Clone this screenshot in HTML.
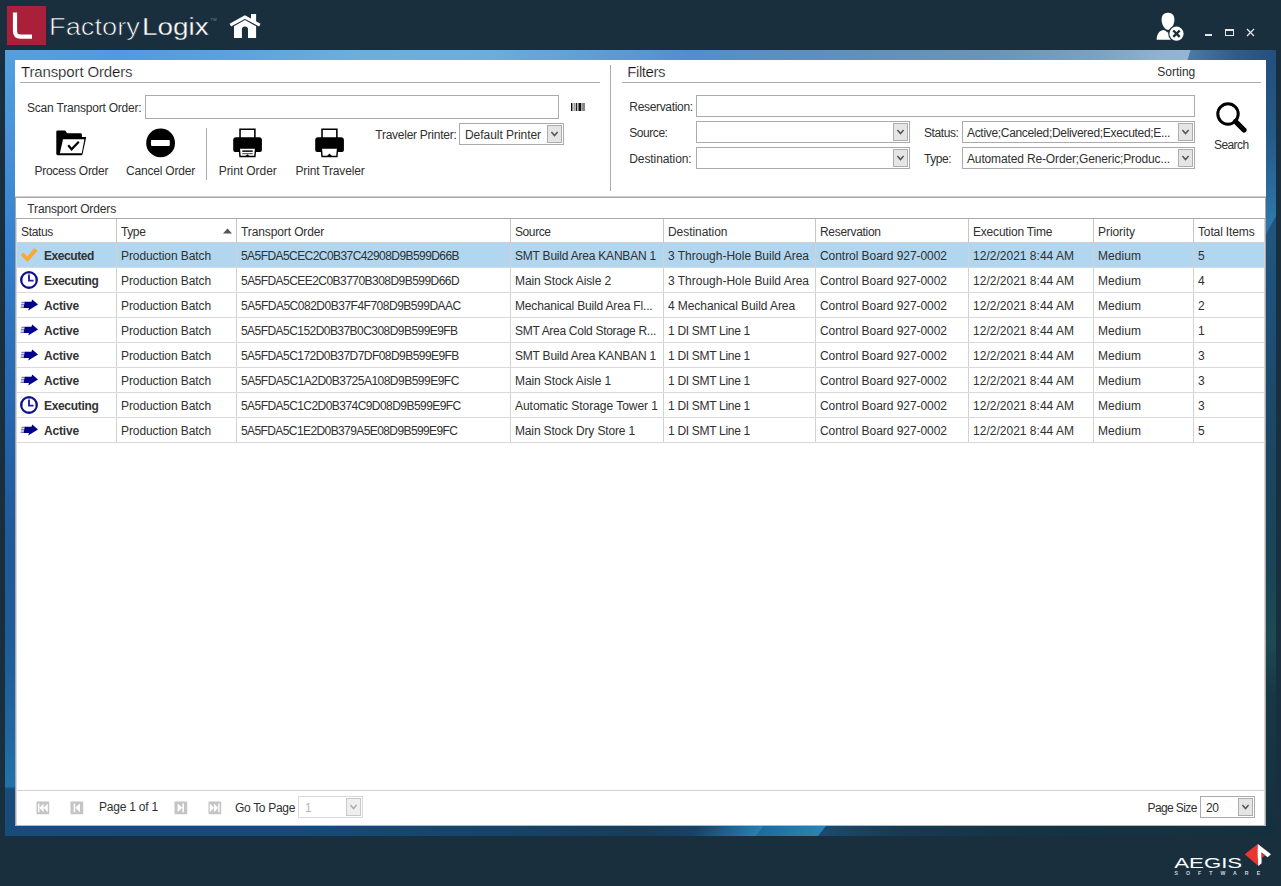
<!DOCTYPE html>
<html lang="en">
<head>
<meta charset="utf-8">
<title>FactoryLogix - Transport Orders</title>
<style>
*{box-sizing:border-box;margin:0;padding:0}
html,body{width:1281px;height:886px;overflow:hidden}
body{background:#1a2f3e;font-family:"Liberation Sans",sans-serif;font-size:12px;color:#303030;position:relative}
.abs{position:absolute}
.t{position:absolute;white-space:nowrap;line-height:14px}
#logo{left:7px;top:6px;width:39px;height:39px;background:#aa1f39}
.brand{position:absolute;top:12px;font-size:23px;line-height:30px;color:#fff;white-space:nowrap;transform-origin:0 0}
#frame{left:5px;top:50px;width:1271px;height:786px;background:#1a2f3e}
#fT{left:5px;top:50px;width:1271px;height:10px;background:linear-gradient(90deg,#54a0de 0,#509be0 9%,#5ba4e0 19%,#6bafdf 28%,#6aaddf 38%,#5c9dd8 47%,#4f8fd0 54%,#5a8fc5 60%,#6091bc 68%,#6a95b6 78%,#7ba2c0 86%,#8db1cf 90.5%,#93b6d2 93.1%)}
#fTR{left:1184.5px;top:50px;width:91.5px;height:10px;background:linear-gradient(90deg,#4d7da7 0,#3f6e9a 25%,#2f5d8a 55%,#234f7c 100%);clip-path:polygon(6px 0,100% 0,100% 100%,3px 100%)}
#fL{left:5px;top:50px;width:10px;height:786px;background:linear-gradient(180deg,#54a0de 0,#4790d8 13%,#3580cf 25%,#2b70bb 38%,#2463aa 50%,#1f5a9a 62%,#1e5c98 75%,#2068a0 87.8%,#2272a8 93.7%,#184c7c 94%,#174b7a 100%)}
#fR{left:1266px;top:60px;width:10px;height:776px;background:linear-gradient(180deg,#20557f 0,#20557f 23%,#1e5078 32%,#1b4663 50%,#1a4457 65%,#1d4a52 75%,#163843 82%,#14303f 100%)}
#fR2{left:1266px;top:60px;width:10px;height:176px;background:linear-gradient(180deg,#23507f 0,#245886 40%,#2a6a9b 70%,#2e76a9 90%,#2e76a9 100%);clip-path:polygon(0 0,100% 0,100% 156px,0 174px)}
#fB{left:5px;top:826px;width:1271px;height:10px;overflow:hidden;background:linear-gradient(90deg,#174b7a 0,#164a78 23%,#15446b 38%,#163d5c 50%,#174269 54.7%,#1b4a6e 64.5%,#163a52 70.5%,#153443 80%,#14303f 100%)}
#fB i{position:absolute;top:0;height:10px;transform:skewX(-38.66deg)}
#panel{left:15px;top:60px;width:1251px;height:766px;background:#fff}
.h1{font-size:15px;line-height:18px;color:#111;-webkit-text-stroke:0.22px #fff}
.hr{height:1px;background:#ababab}
.inp{border:1px solid #ababab;background:#fff}
.cb{border:1px solid #ababab;background:#fff}
.cb .btn{position:absolute;right:1px;top:1px;bottom:1px;width:15px;border:1px solid #adadad;background:#e5e5e5}
.cb .btn svg{position:absolute;left:2px;top:5px}
.cb .v{position:absolute;left:4px;top:4px;white-space:nowrap;line-height:14px}
.lbl{text-align:center}
#grid{left:17px;top:219px;width:1247px}
.row{position:absolute;left:0;width:1247px;height:25px;border-bottom:1px solid #d9d9d9}
.row.sel{background:#b0d6f0}
.hdr{position:absolute;left:0;top:0;width:1247px;height:24px;border-bottom:1px solid #d2d2d2}
.c{position:absolute;top:0;height:100%;border-right:1px solid #d2d2d2;padding-left:4px;padding-top:1px;line-height:25px;white-space:nowrap;overflow:hidden}
.hdr .c{line-height:25px;border-right-color:#c6c6c6;height:24px}
.c1{left:0;width:100px}.c2{left:100px;width:120px}.c3{left:220px;width:274px}.c4{left:494px;width:153px}
.c5{left:647px;width:152px}.c6{left:799px;width:153px}.c7{left:952px;width:125px}.c8{left:1077px;width:100px}.c9{left:1177px;width:70px;border-right:none}
.st{font-weight:bold;padding-left:27px;color:#333}
.ico{position:absolute;left:2px;top:3px}
</style>
</head>
<body>
<div id="logo" class="abs"><svg width="39" height="39" viewBox="0 0 39 39"><path d="M8 6.5 V25 Q8 30.6 13.5 30.6 H25" fill="none" stroke="#fff" stroke-width="4.2"/></svg></div>
<div class="brand" style="left:49.4px;transform:scaleX(1.185);-webkit-text-stroke:0.65px #1a2f3e">Factory</div>
<div class="brand" style="left:141.8px;transform:scaleX(1.214);-webkit-text-stroke:0.3px #1a2f3e">Logix</div>
<div class="t" style="left:210.5px;top:17px;font-size:4px;line-height:5px;color:#7f8d98;letter-spacing:0.2px">TM</div>
<svg class="abs" style="left:229px;top:13px" width="33" height="26" viewBox="0 0 33 26">
 <path d="M1.3 12.1 L15.9 4.1 L30.8 12.1" fill="none" stroke="#fff" stroke-width="3.1"/>
 <path d="M22 0.9 H27.1 V9 L22 6.2 Z" fill="#fff"/>
 <path d="M5 13.2 L15.9 7.1 L27.1 13.2 V25.1 H19 V16.6 A3.05 3.05 0 0 0 12.9 16.6 V25.1 H5 Z" fill="#fff"/>
</svg>
<svg class="abs" style="left:1155px;top:11px" width="32" height="32" viewBox="0 0 32 32">
 <path d="M13 1.7 C17.6 1.7 19.4 4.8 19.4 8.8 C19.4 13.4 16.4 18.9 13 18.9 C9.6 18.9 6.6 13.4 6.6 8.8 C6.6 4.8 8.4 1.7 13 1.7 Z" fill="#fff"/>
 <path d="M1.6 28.7 C1.8 22.6 4.4 19.9 8.2 19 L10 19.5 L14.8 22.9 L17 28.7 Z" fill="#fff"/>
 <circle cx="21.5" cy="22.7" r="8.3" fill="#1a2f3e"/>
 <circle cx="21.5" cy="22.7" r="7.1" fill="#fff"/>
 <path d="M18.3 19.5 L24.7 25.9 M24.7 19.5 L18.3 25.9" stroke="#1a2f3e" stroke-width="2.4"/>
</svg>
<div class="abs" style="left:1205px;top:34px;width:7px;height:2px;background:#e6e6e6"></div>
<div class="abs" style="left:1225px;top:29px;width:9px;height:7px;border:1px solid #e6e6e6;border-top-width:2px"></div>
<svg class="abs" style="left:1246px;top:28px" width="9" height="9" viewBox="0 0 9 9"><path d="M1 1 L8 8 M8 1 L1 8" stroke="#e6e6e6" stroke-width="1.3"/></svg>
<div id="fT" class="abs"></div>
<div id="fTR" class="abs"></div>
<div id="fL" class="abs"></div>
<div id="fR" class="abs"></div>
<div id="fR2" class="abs"></div>
<div id="panel" class="abs"></div>
<div id="fB" class="abs"><i style="left:690px;width:65px;background:linear-gradient(90deg,#174269,#2a80ad)"></i><i style="left:755px;width:62px;background:linear-gradient(90deg,#1d6c9c,#2e82ad)"></i></div>
<div class="t h1" style="left:21px;top:63px;font-size:15px;letter-spacing:-0.135px;">Transport Orders</div>
<div class="abs hr" style="left:20px;top:82px;width:580px"></div>
<div class="t" style="left:27px;top:101px;letter-spacing:-0.201px;">Scan Transport Order:</div>
<div class="abs inp" style="left:145px;top:95px;width:414px;height:24px"></div>
<svg class="abs" style="left:570.8px;top:103px" width="14" height="8" viewBox="0 0 14 8"><rect x="0" y="0" width="1.4" height="8" fill="#111"/><rect x="1.4" y="0" width="1" height="8" fill="#8a8a8a"/><rect x="2.4" y="0" width="1" height="8" fill="#c4c4c4"/><rect x="3.4" y="0" width="1.1" height="8" fill="#777"/><rect x="5" y="0" width="1.1" height="8" fill="#222"/><rect x="6.1" y="0" width="1.2" height="8" fill="#b5b5b5"/><rect x="7.5" y="0" width="2.7" height="8" fill="#111"/><rect x="10.2" y="0" width="0.9" height="8" fill="#aaa"/><rect x="11.1" y="0" width="2.9" height="8" fill="#858585"/></svg>
<svg class="abs" style="left:56px;top:129.5px" width="31" height="26" viewBox="0 0 31 26">
 <path d="M0.3 1.8 Q0.3 0.5 1.6 0.5 H8.6 Q9.4 0.5 9.8 1.2 L11 3.3 H24.6 Q25.9 3.3 25.9 4.6 V8 H7 L2 24 H0.3 Z" fill="#000"/>
 <path d="M7.6 7 H30.2 L26.6 24 Q26.3 25.2 25.1 25.2 H1.6 Q0.3 25.2 0.6 24 L4.2 9 Z" fill="#000"/>
 <path d="M7 9.3 H28.4 L25.8 23.3 H3.9 Z" fill="#fff"/>
 <path d="M12.2 15.2 L15.6 19.3 L22.8 11.8" fill="none" stroke="#000" stroke-width="2.2"/>
</svg>
<div class="t" style="left:34.5px;top:164px;letter-spacing:-0.289px;">Process Order</div>
<svg class="abs" style="left:146px;top:128px" width="30" height="30" viewBox="0 0 30 30"><circle cx="14.6" cy="14.9" r="14.4" fill="#000"/><rect x="5" y="12" width="18.8" height="5.9" rx="0.8" fill="#fff"/></svg>
<div class="t" style="left:126px;top:164px;letter-spacing:-0.198px;">Cancel Order</div>
<div class="abs" style="left:206px;top:128px;width:1px;height:52px;background:#ababab"></div>
<svg class="abs" style="left:232.7px;top:128px" width="29.3" height="30" viewBox="0 0 30 30" preserveAspectRatio="none"><path d="M7.2 1.3 H22.4 V11 H7.2 Z" fill="#fff" stroke="#000" stroke-width="1.6"/><path d="M3.2 9.3 H26.6 Q29.6 9.3 29.6 12.3 V22 Q29.6 24 27.6 24 H2.2 Q0.2 24 0.2 22 V12.3 Q0.2 9.3 3.2 9.3 Z" fill="#000"/>
 <path d="M6.4 20 H23.2 L22.4 28.6 H7.2 Z" fill="#fff" stroke="#000" stroke-width="1.5"/>
 <path d="M9.5 22.3 H20.2 V24 H9.5 Z" fill="#222"/><path d="M9.5 25.2 H20.2 V26.2 H9.5 Z" fill="#444"/><path d="M12.3 28.6 L14.8 26.3 L17.3 28.6 Z" fill="#000"/>
</svg>
<div class="t" style="left:218.7px;top:164px;letter-spacing:-0.062px;">Print Order</div>
<svg class="abs" style="left:314.6px;top:128px" width="29.3" height="30" viewBox="0 0 30 30" preserveAspectRatio="none"><path d="M7.2 1.3 H22.4 V11 H7.2 Z" fill="#fff" stroke="#000" stroke-width="1.6"/><path d="M3.2 9.3 H26.6 Q29.6 9.3 29.6 12.3 V22 Q29.6 24 27.6 24 H2.2 Q0.2 24 0.2 22 V12.3 Q0.2 9.3 3.2 9.3 Z" fill="#000"/>
 <path d="M6.4 20 H23.2 L22.4 28.6 H7.2 Z" fill="#fff" stroke="#000" stroke-width="1.5"/>
 <path d="M11.8 28.6 L14.8 25.6 L17.8 28.6 Z" fill="#000"/>
</svg>
<div class="t" style="left:295.5px;top:164px;letter-spacing:-0.169px;">Print Traveler</div>
<div class="t" style="left:375.3px;top:128px;letter-spacing:-0.258px;">Traveler Printer:</div>
<div class="abs cb" style="left:459px;top:123px;width:105px;height:22px;"><span class="v" style="left:5px;letter-spacing:-0.047px;">Default Printer</span><div class="btn"><svg width="9" height="6" viewBox="0 0 9 6"><path d="M1.4 0.9 L4.5 4.5 L7.6 0.9" fill="none" stroke="#555" stroke-width="1.5"/></svg></div></div>
<div class="abs" style="left:610px;top:65px;width:1px;height:126px;background:#ababab"></div>
<div class="t h1" style="left:627.3px;top:63px;font-size:15px;letter-spacing:-0.449px;">Filters</div>
<div class="abs hr" style="left:622px;top:82px;width:639px"></div>
<div class="t" style="left:1157.3px;top:65px;letter-spacing:-0.004px;">Sorting</div>
<div class="t" style="left:629.3px;top:100px;letter-spacing:-0.323px;">Reservation:</div>
<div class="abs inp" style="left:696px;top:95px;width:499px;height:22px"></div>
<div class="t" style="left:629.3px;top:126px;letter-spacing:-0.451px;">Source:</div>
<div class="abs cb" style="left:696px;top:121px;width:214px;height:22px;"><div class="btn"><svg width="9" height="6" viewBox="0 0 9 6"><path d="M1.4 0.9 L4.5 4.5 L7.6 0.9" fill="none" stroke="#555" stroke-width="1.5"/></svg></div></div>
<div class="t" style="left:629.3px;top:152px;letter-spacing:-0.09px;">Destination:</div>
<div class="abs cb" style="left:696px;top:147px;width:214px;height:22px;"><div class="btn"><svg width="9" height="6" viewBox="0 0 9 6"><path d="M1.4 0.9 L4.5 4.5 L7.6 0.9" fill="none" stroke="#555" stroke-width="1.5"/></svg></div></div>
<div class="t" style="left:924px;top:126px;letter-spacing:-0.423px;">Status:</div>
<div class="abs cb" style="left:962px;top:121px;width:233px;height:22px;"><span class="v" style="left:4px;letter-spacing:-0.319px;">Active;Canceled;Delivered;Executed;E...</span><div class="btn"><svg width="9" height="6" viewBox="0 0 9 6"><path d="M1.4 0.9 L4.5 4.5 L7.6 0.9" fill="none" stroke="#555" stroke-width="1.5"/></svg></div></div>
<div class="t" style="left:924px;top:152px;letter-spacing:-0.412px;">Type:</div>
<div class="abs cb" style="left:962px;top:147px;width:233px;height:22px;"><span class="v" style="left:4px;letter-spacing:-0.141px;">Automated Re-Order;Generic;Produc...</span><div class="btn"><svg width="9" height="6" viewBox="0 0 9 6"><path d="M1.4 0.9 L4.5 4.5 L7.6 0.9" fill="none" stroke="#555" stroke-width="1.5"/></svg></div></div>
<svg class="abs" style="left:1214px;top:101px" width="34" height="32" viewBox="0 0 34 32"><circle cx="14" cy="13" r="10.2" fill="none" stroke="#000" stroke-width="3"/><path d="M21.5 20.5 L30 29" stroke="#000" stroke-width="5.3" stroke-linecap="round"/></svg>
<div class="t" style="left:1214px;top:138px;letter-spacing:-0.589px;">Search</div>
<div class="abs" style="left:15px;top:196px;width:1251px;height:1px;background:#cdcdcd"></div>
<div class="abs" style="left:15px;top:197px;width:1251px;height:1px;background:#a9a9a9"></div>
<div class="abs" style="left:15px;top:197px;width:1px;height:629px;background:#aaa7a4"></div>
<div class="abs" style="left:1265px;top:197px;width:1px;height:629px;background:#aaa7a4"></div>
<div class="abs" style="left:15px;top:825px;width:1251px;height:1px;background:#bdb8b4"></div>
<div class="abs" style="left:16px;top:219px;width:1px;height:606px;background:#d6d6d6"></div>
<div class="abs" style="left:1264px;top:219px;width:1px;height:606px;background:#d6d6d6"></div>
<div class="t" style="left:27.3px;top:202px;letter-spacing:-0.139px;">Transport Orders</div>
<div class="abs" style="left:15px;top:218px;width:1251px;height:1px;background:#ababab"></div>
<div id="grid" class="abs">
<div class="hdr">
<div class="c c1"><span style="letter-spacing:-0.355px">Status</span></div>
<div class="c c2"><span style="letter-spacing:-0.404px">Type</span><svg style="position:absolute;right:4px;top:9px" width="9" height="6" viewBox="0 0 9 6"><path d="M0 5.5 L4.5 0.5 L9 5.5 Z" fill="#555"/></svg></div>
<div class="c c3"><span style="letter-spacing:-0.111px">Transport Order</span></div>
<div class="c c4"><span style="letter-spacing:-0.405px">Source</span></div>
<div class="c c5"><span style="letter-spacing:-0.059px">Destination</span></div>
<div class="c c6"><span style="letter-spacing:-0.312px">Reservation</span></div>
<div class="c c7"><span style="letter-spacing:-0.196px">Execution Time</span></div>
<div class="c c8"><span style="letter-spacing:-0.055px">Priority</span></div>
<div class="c c9"><span style="letter-spacing:-0.139px">Total Items</span></div>
</div>
<div class="row sel" style="top:24px"><div class="c c1 st"><svg class="ico" width="20" height="18" viewBox="0 0 20 18"><path d="M1.8 9.2 L4.3 6.5 L8.4 10.4 L15.5 2 L18.4 4.8 L8.6 16 Z" fill="#fba832"/></svg><span style="letter-spacing:-0.42px">Executed</span></div><div class="c c2"><span style="letter-spacing:-0.087px">Production Batch</span></div><div class="c c3"><span style="letter-spacing:-0.567px">5A5FDA5CEC2C0B37C42908D9B599D66B</span></div><div class="c c4"><span style="letter-spacing:-0.211px">SMT Build Area KANBAN 1</span></div><div class="c c5"><span style="letter-spacing:-0.008px">3 Through-Hole Build Area</span></div><div class="c c6"><span style="letter-spacing:-0.05px">Control Board 927-0002</span></div><div class="c c7"><span style="letter-spacing:0.015px">12/2/2021 8:44 AM</span></div><div class="c c8"><span style="letter-spacing:0.069px">Medium</span></div><div class="c c9">5</div></div>
<div class="row " style="top:49px"><div class="c c1 st"><svg class="ico" style="top:2px" width="20" height="20" viewBox="0 0 20 20"><circle cx="10" cy="10" r="7.85" fill="#fff" stroke="#10108a" stroke-width="2.2"/><path d="M10 4.4 V10.6 H14.6" fill="none" stroke="#2222a0" stroke-width="1.9"/><path d="M10 2.8 V4 M10 16 V17.2 M2.8 10 H4 M16 10 H17.2" stroke="#10108a" stroke-width="1" opacity="0.6"/></svg><span style="letter-spacing:-0.329px">Executing</span></div><div class="c c2"><span style="letter-spacing:-0.087px">Production Batch</span></div><div class="c c3"><span style="letter-spacing:-0.546px">5A5FDA5CEE2C0B3770B308D9B599D66D</span></div><div class="c c4"><span style="letter-spacing:-0.114px">Main Stock Aisle 2</span></div><div class="c c5"><span style="letter-spacing:-0.008px">3 Through-Hole Build Area</span></div><div class="c c6"><span style="letter-spacing:-0.05px">Control Board 927-0002</span></div><div class="c c7"><span style="letter-spacing:0.015px">12/2/2021 8:44 AM</span></div><div class="c c8"><span style="letter-spacing:0.069px">Medium</span></div><div class="c c9">4</div></div>
<div class="row " style="top:74px"><div class="c c1 st"><svg class="ico" width="20" height="18" viewBox="0 0 20 18"><path d="M5.8 5.8 H12.4 L13.2 3.4 L19 8.6 L9.2 14.4 L10 12 H4.6 Z" fill="#00008b"/><path d="M2.6 5.8 H6.5 V7.3 H2.2 Z M2.1 8.1 H6 V9.6 H1.8 Z M1.7 10.4 H5.6 V12 H1.5 Z" fill="#00008b" opacity="0.5"/></svg><span style="letter-spacing:-0.172px">Active</span></div><div class="c c2"><span style="letter-spacing:-0.087px">Production Batch</span></div><div class="c c3"><span style="letter-spacing:-0.49px">5A5FDA5C082D0B37F4F708D9B599DAAC</span></div><div class="c c4"><span style="letter-spacing:-0.17px">Mechanical Build Area Fl...</span></div><div class="c c5"><span style="letter-spacing:-0.076px">4 Mechanical Build Area</span></div><div class="c c6"><span style="letter-spacing:-0.05px">Control Board 927-0002</span></div><div class="c c7"><span style="letter-spacing:0.015px">12/2/2021 8:44 AM</span></div><div class="c c8"><span style="letter-spacing:0.069px">Medium</span></div><div class="c c9">2</div></div>
<div class="row " style="top:99px"><div class="c c1 st"><svg class="ico" width="20" height="18" viewBox="0 0 20 18"><path d="M5.8 5.8 H12.4 L13.2 3.4 L19 8.6 L9.2 14.4 L10 12 H4.6 Z" fill="#00008b"/><path d="M2.6 5.8 H6.5 V7.3 H2.2 Z M2.1 8.1 H6 V9.6 H1.8 Z M1.7 10.4 H5.6 V12 H1.5 Z" fill="#00008b" opacity="0.5"/></svg><span style="letter-spacing:-0.172px">Active</span></div><div class="c c2"><span style="letter-spacing:-0.087px">Production Batch</span></div><div class="c c3"><span style="letter-spacing:-0.549px">5A5FDA5C152D0B37B0C308D9B599E9FB</span></div><div class="c c4"><span style="letter-spacing:-0.289px">SMT Area Cold Storage R...</span></div><div class="c c5"><span style="letter-spacing:-0.299px">1 DI SMT Line 1</span></div><div class="c c6"><span style="letter-spacing:-0.05px">Control Board 927-0002</span></div><div class="c c7"><span style="letter-spacing:0.015px">12/2/2021 8:44 AM</span></div><div class="c c8"><span style="letter-spacing:0.069px">Medium</span></div><div class="c c9">1</div></div>
<div class="row " style="top:124px"><div class="c c1 st"><svg class="ico" width="20" height="18" viewBox="0 0 20 18"><path d="M5.8 5.8 H12.4 L13.2 3.4 L19 8.6 L9.2 14.4 L10 12 H4.6 Z" fill="#00008b"/><path d="M2.6 5.8 H6.5 V7.3 H2.2 Z M2.1 8.1 H6 V9.6 H1.8 Z M1.7 10.4 H5.6 V12 H1.5 Z" fill="#00008b" opacity="0.5"/></svg><span style="letter-spacing:-0.172px">Active</span></div><div class="c c2"><span style="letter-spacing:-0.087px">Production Batch</span></div><div class="c c3"><span style="letter-spacing:-0.552px">5A5FDA5C172D0B37D7DF08D9B599E9FB</span></div><div class="c c4"><span style="letter-spacing:-0.211px">SMT Build Area KANBAN 1</span></div><div class="c c5"><span style="letter-spacing:-0.299px">1 DI SMT Line 1</span></div><div class="c c6"><span style="letter-spacing:-0.05px">Control Board 927-0002</span></div><div class="c c7"><span style="letter-spacing:0.015px">12/2/2021 8:44 AM</span></div><div class="c c8"><span style="letter-spacing:0.069px">Medium</span></div><div class="c c9">3</div></div>
<div class="row " style="top:149px"><div class="c c1 st"><svg class="ico" width="20" height="18" viewBox="0 0 20 18"><path d="M5.8 5.8 H12.4 L13.2 3.4 L19 8.6 L9.2 14.4 L10 12 H4.6 Z" fill="#00008b"/><path d="M2.6 5.8 H6.5 V7.3 H2.2 Z M2.1 8.1 H6 V9.6 H1.8 Z M1.7 10.4 H5.6 V12 H1.5 Z" fill="#00008b" opacity="0.5"/></svg><span style="letter-spacing:-0.172px">Active</span></div><div class="c c2"><span style="letter-spacing:-0.087px">Production Batch</span></div><div class="c c3"><span style="letter-spacing:-0.511px">5A5FDA5C1A2D0B3725A108D9B599E9FC</span></div><div class="c c4"><span style="letter-spacing:-0.114px">Main Stock Aisle 1</span></div><div class="c c5"><span style="letter-spacing:-0.299px">1 DI SMT Line 1</span></div><div class="c c6"><span style="letter-spacing:-0.05px">Control Board 927-0002</span></div><div class="c c7"><span style="letter-spacing:0.015px">12/2/2021 8:44 AM</span></div><div class="c c8"><span style="letter-spacing:0.069px">Medium</span></div><div class="c c9">3</div></div>
<div class="row " style="top:174px"><div class="c c1 st"><svg class="ico" style="top:2px" width="20" height="20" viewBox="0 0 20 20"><circle cx="10" cy="10" r="7.85" fill="#fff" stroke="#10108a" stroke-width="2.2"/><path d="M10 4.4 V10.6 H14.6" fill="none" stroke="#2222a0" stroke-width="1.9"/><path d="M10 2.8 V4 M10 16 V17.2 M2.8 10 H4 M16 10 H17.2" stroke="#10108a" stroke-width="1" opacity="0.6"/></svg><span style="letter-spacing:-0.329px">Executing</span></div><div class="c c2"><span style="letter-spacing:-0.087px">Production Batch</span></div><div class="c c3"><span style="letter-spacing:-0.555px">5A5FDA5C1C2D0B374C9D08D9B599E9FC</span></div><div class="c c4"><span style="letter-spacing:-0.034px">Automatic Storage Tower 1</span></div><div class="c c5"><span style="letter-spacing:-0.299px">1 DI SMT Line 1</span></div><div class="c c6"><span style="letter-spacing:-0.05px">Control Board 927-0002</span></div><div class="c c7"><span style="letter-spacing:0.015px">12/2/2021 8:44 AM</span></div><div class="c c8"><span style="letter-spacing:0.069px">Medium</span></div><div class="c c9">3</div></div>
<div class="row " style="top:199px"><div class="c c1 st"><svg class="ico" width="20" height="18" viewBox="0 0 20 18"><path d="M5.8 5.8 H12.4 L13.2 3.4 L19 8.6 L9.2 14.4 L10 12 H4.6 Z" fill="#00008b"/><path d="M2.6 5.8 H6.5 V7.3 H2.2 Z M2.1 8.1 H6 V9.6 H1.8 Z M1.7 10.4 H5.6 V12 H1.5 Z" fill="#00008b" opacity="0.5"/></svg><span style="letter-spacing:-0.172px">Active</span></div><div class="c c2"><span style="letter-spacing:-0.087px">Production Batch</span></div><div class="c c3"><span style="letter-spacing:-0.596px">5A5FDA5C1E2D0B379A5E08D9B599E9FC</span></div><div class="c c4"><span style="letter-spacing:-0.153px">Main Stock Dry Store 1</span></div><div class="c c5"><span style="letter-spacing:-0.299px">1 DI SMT Line 1</span></div><div class="c c6"><span style="letter-spacing:-0.05px">Control Board 927-0002</span></div><div class="c c7"><span style="letter-spacing:0.015px">12/2/2021 8:44 AM</span></div><div class="c c8"><span style="letter-spacing:0.069px">Medium</span></div><div class="c c9">5</div></div>
</div>
<div class="abs" style="left:17px;top:790px;width:1247px;height:1px;background:#cfcfcf"></div>
<svg class="abs" style="left:36px;top:801px" width="14" height="14" viewBox="0 0 14 14"><rect x="0.5" y="0.5" width="12.7" height="12.7" rx="0.8" fill="#c4c4c4"/><path d="M2 2.4 H3.4 V11.2 H2 Z M3.4 6.8 L7.6 2.4 V11.2 Z M7.6 6.8 L11.8 2.4 V11.2 Z" fill="#fff"/></svg>
<svg class="abs" style="left:70.3px;top:801px" width="14" height="14" viewBox="0 0 14 14"><rect x="0.5" y="0.5" width="12.7" height="12.7" rx="0.8" fill="#c4c4c4"/><path d="M3.6 2.4 H5.2 V11.2 H3.6 Z M5.2 6.8 L10 2.4 V11.2 Z" fill="#fff"/></svg>
<div class="t" style="left:99px;top:800px;letter-spacing:-0.217px;">Page 1 of 1</div>
<svg class="abs" style="left:173.5px;top:801px" width="14" height="14" viewBox="0 0 14 14"><rect x="0.5" y="0.5" width="12.7" height="12.7" rx="0.8" fill="#c4c4c4"/><path d="M10 2.4 H8.4 V11.2 H10 Z M8.4 6.8 L3.6 2.4 V11.2 Z" fill="#fff"/></svg>
<svg class="abs" style="left:207.5px;top:801px" width="14" height="14" viewBox="0 0 14 14"><rect x="0.5" y="0.5" width="12.7" height="12.7" rx="0.8" fill="#c4c4c4"/><path d="M11.6 2.4 H10.2 V11.2 H11.6 Z M10.2 6.8 L6 2.4 V11.2 Z M6 6.8 L1.8 2.4 V11.2 Z" fill="#fff"/></svg>
<div class="t" style="left:235px;top:801px;letter-spacing:-0.317px;">Go To Page</div>
<div class="abs cb" style="left:298px;top:796px;width:65px;height:22px;border-color:#d9d9d9;"><span class="v" style="left:6px;color:#b5b5b5;">1</span><div class="btn" style="border-color:#c8c8c8;background:#efefef"><svg width="9" height="6" viewBox="0 0 9 6"><path d="M1.4 0.9 L4.5 4.5 L7.6 0.9" fill="none" stroke="#adadad" stroke-width="1.5"/></svg></div></div>
<div class="t" style="left:1147.5px;top:801px;letter-spacing:-0.6px;">Page Size</div>
<div class="abs cb" style="left:1200px;top:796px;width:55px;height:22px;"><span class="v" style="left:5px;letter-spacing:-0.43px;">20</span><div class="btn"><svg width="9" height="6" viewBox="0 0 9 6"><path d="M1.4 0.9 L4.5 4.5 L7.6 0.9" fill="none" stroke="#555" stroke-width="1.5"/></svg></div></div>
<svg class="abs" style="left:1170px;top:840px" width="108" height="42" viewBox="0 0 108 42">
 <path d="M74.7 14.3 L87.8 3.9 L88.3 26.1 Z" fill="#ea3530"/>
 <path d="M87.8 3.9 L101 14.3 L97.6 17.2 L91.6 12.6 L91.6 23.2 L88.3 26.1 L87.6 14 Z" fill="#fff"/>
 <path d="M91.6 12.6 L95.2 15.3 L91.6 18.6 Z" fill="#d8332e"/>
 <text x="4.3" y="27.9" font-family="Liberation Sans, sans-serif" font-size="14.8" fill="#fff" textLength="67.8" lengthAdjust="spacingAndGlyphs">AEGIS</text>
 <text x="4.5" y="35.1" font-family="Liberation Sans, sans-serif" font-weight="bold" font-size="5.2" fill="#cfd5d9" textLength="85.6" lengthAdjust="spacing">SOFTWARE</text>
</svg>
</body>
</html>
